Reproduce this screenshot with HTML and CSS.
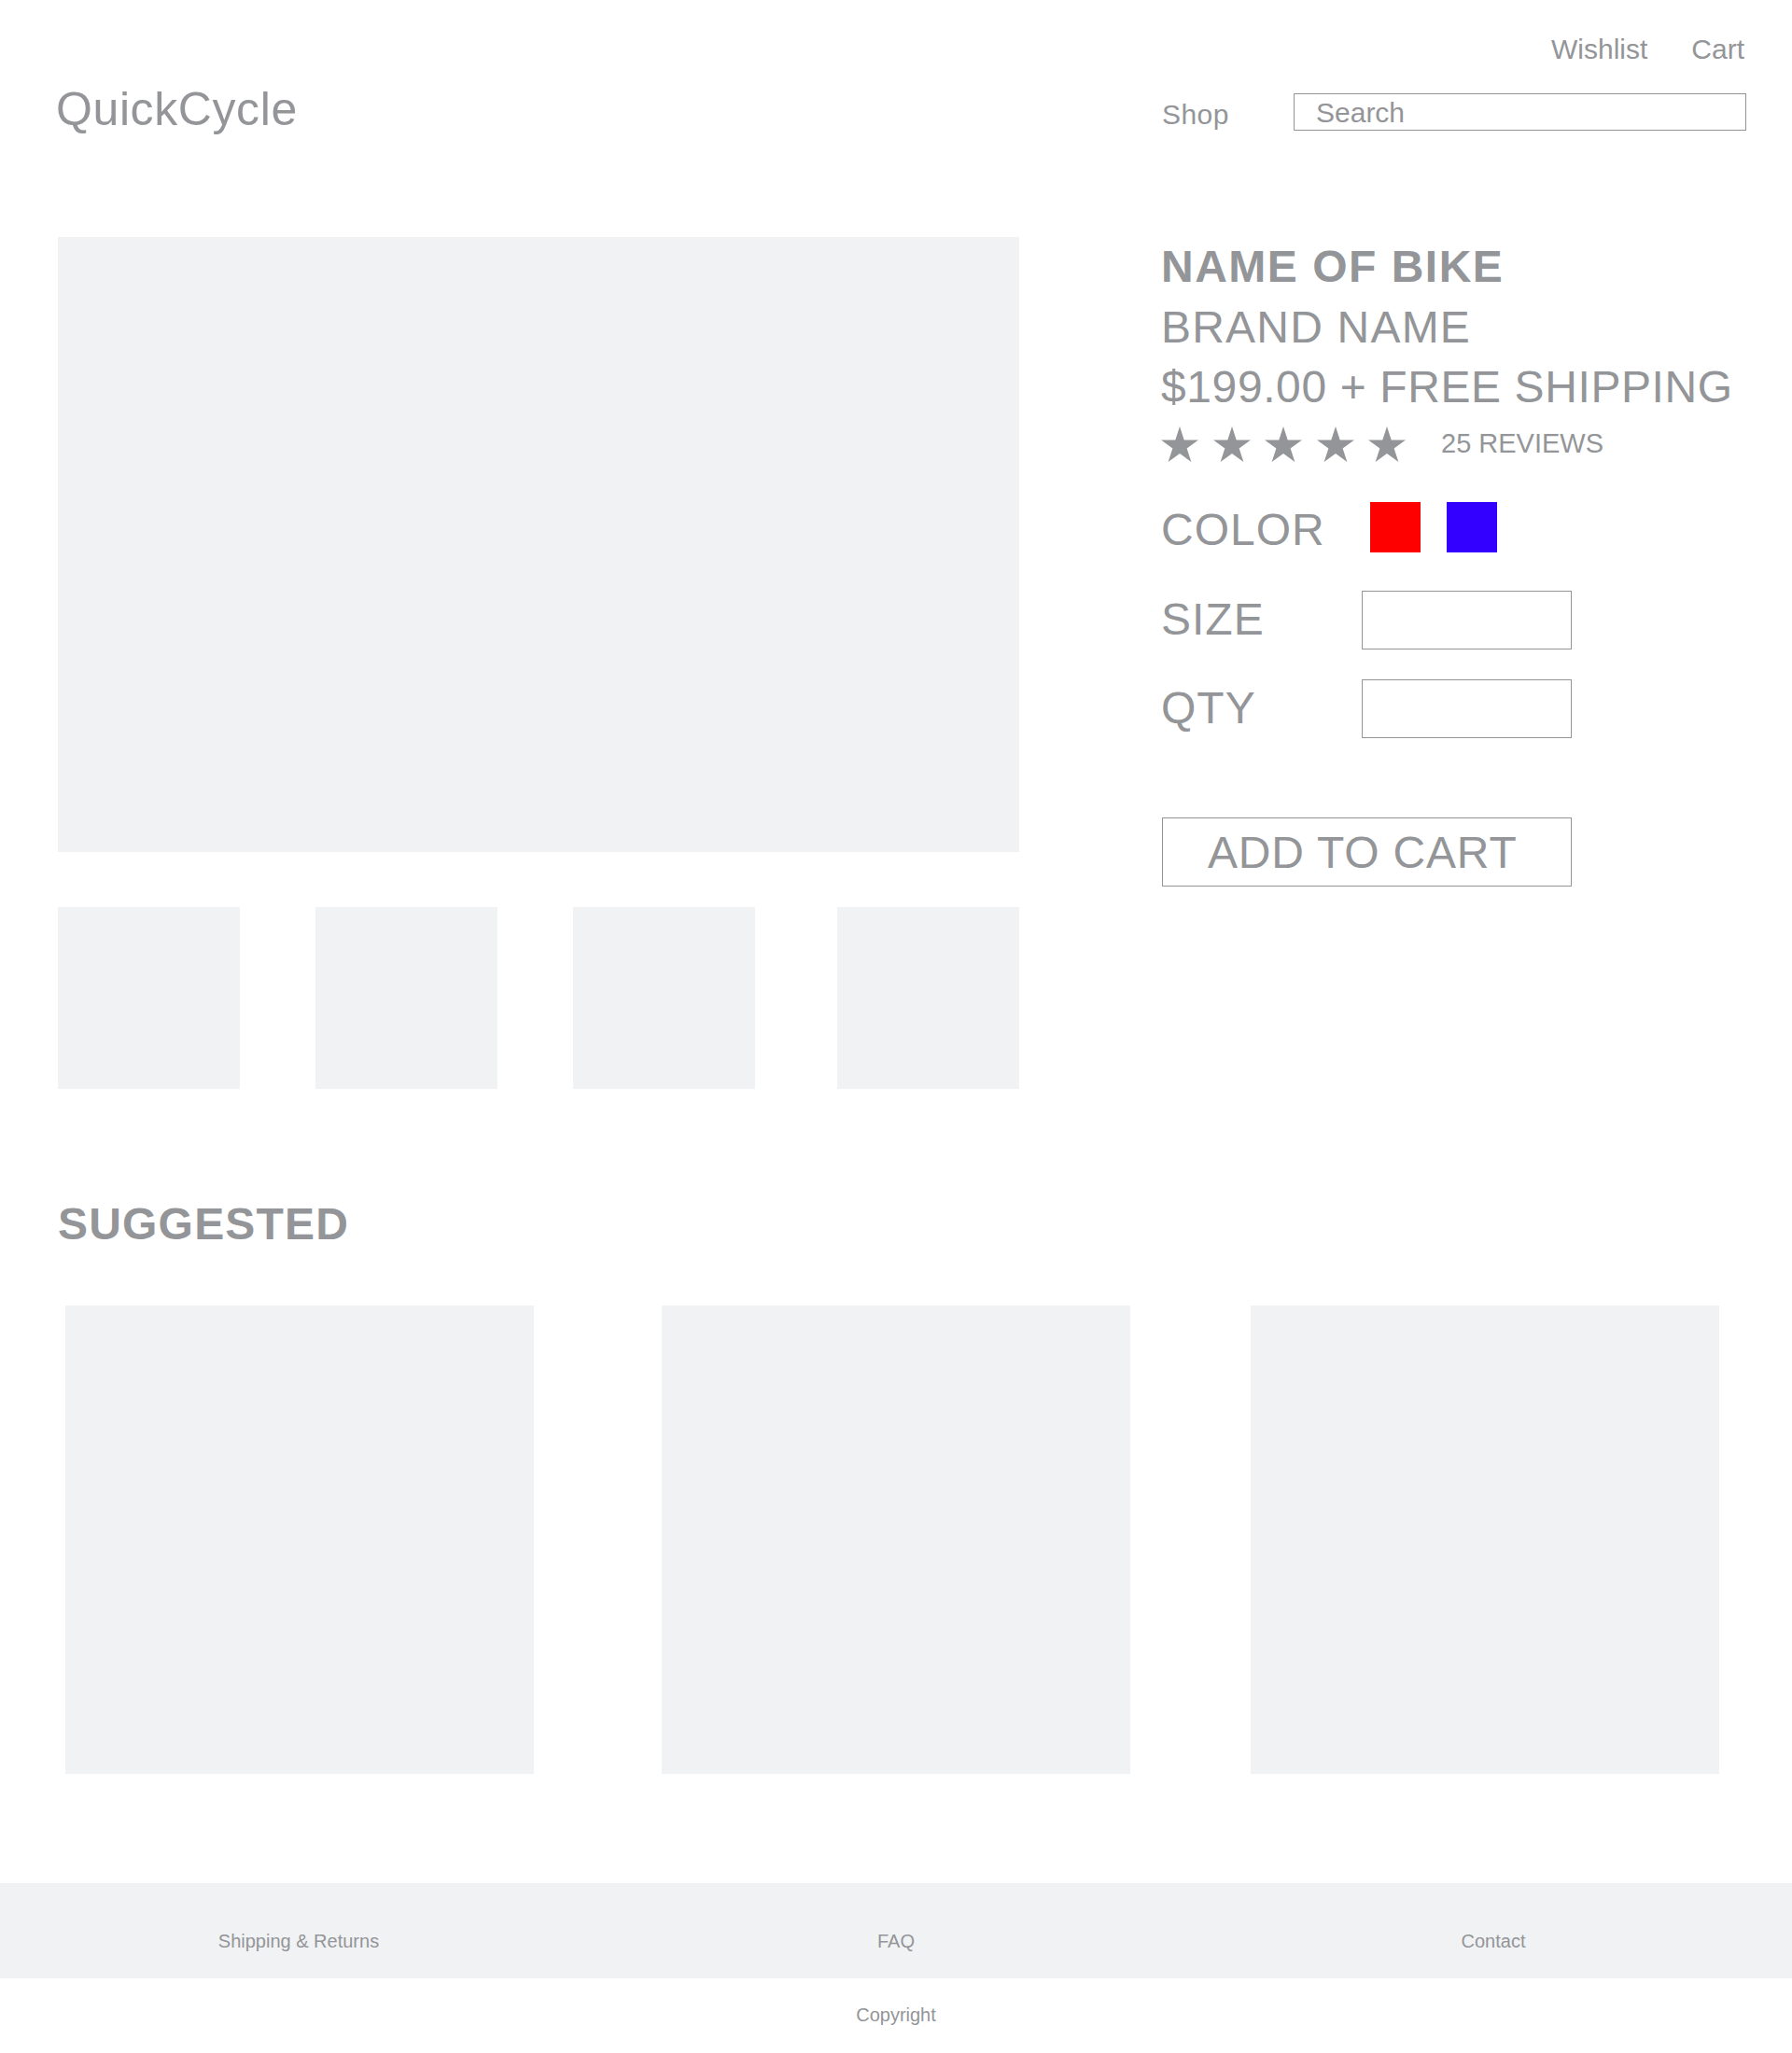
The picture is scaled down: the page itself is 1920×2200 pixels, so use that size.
FILE: index.html
```html
<!DOCTYPE html>
<html lang="en">
<head>
<meta charset="utf-8">
<title>QuickCycle — Name of Bike</title>
<link rel="stylesheet" href="styles.css">
</head>
<body>
<header class="site-header">
  <nav class="util-nav">
    <a href="#" class="util-link">Wishlist</a>
    <a href="#" class="util-link">Cart</a>
  </nav>
  <div class="header-main">
    <div class="logo">QuickCycle</div>
    <div class="header-right">
      <a href="#" class="shop-link">Shop</a>
      <div class="search">Search</div>
    </div>
  </div>
</header>

<main class="product">
  <section class="gallery">
    <div class="hero-img"></div>
    <div class="thumbs">
      <div class="thumb"></div>
      <div class="thumb"></div>
      <div class="thumb"></div>
      <div class="thumb thumb-last"></div>
    </div>
  </section>

  <section class="details">
    <h1 class="bike-name">NAME OF BIKE</h1>
    <p class="bike-line bike-brand">BRAND NAME</p>
    <p class="bike-line bike-price">$199.00 + FREE SHIPPING</p>
    <div class="rating">
      <div class="stars">
        <svg class="star" viewBox="0 0 40 38"><polygon points="20,0 24.71,14.51 39.97,14.51 27.63,23.48 32.34,37.99 20,29.02 7.66,37.99 12.37,23.48 0.03,14.51 15.29,14.51"/></svg>
        <svg class="star" viewBox="0 0 40 38"><polygon points="20,0 24.71,14.51 39.97,14.51 27.63,23.48 32.34,37.99 20,29.02 7.66,37.99 12.37,23.48 0.03,14.51 15.29,14.51"/></svg>
        <svg class="star" viewBox="0 0 40 38"><polygon points="20,0 24.71,14.51 39.97,14.51 27.63,23.48 32.34,37.99 20,29.02 7.66,37.99 12.37,23.48 0.03,14.51 15.29,14.51"/></svg>
        <svg class="star" viewBox="0 0 40 38"><polygon points="20,0 24.71,14.51 39.97,14.51 27.63,23.48 32.34,37.99 20,29.02 7.66,37.99 12.37,23.48 0.03,14.51 15.29,14.51"/></svg>
        <svg class="star" viewBox="0 0 40 38"><polygon points="20,0 24.71,14.51 39.97,14.51 27.63,23.48 32.34,37.99 20,29.02 7.66,37.99 12.37,23.48 0.03,14.51 15.29,14.51"/></svg>
      </div>
      <span class="reviews">25 REVIEWS</span>
    </div>

    <div class="option option-color">
      <span class="opt-label opt-label-color">COLOR</span>
      <div class="swatches">
        <span class="swatch swatch-red"></span>
        <span class="swatch swatch-blue"></span>
      </div>
    </div>
    <div class="option option-size">
      <span class="opt-label">SIZE</span>
      <div class="field"></div>
    </div>
    <div class="option option-qty">
      <span class="opt-label">QTY</span>
      <div class="field"></div>
    </div>

    <button class="add-cart" type="button">ADD TO CART</button>
  </section>
</main>

<section class="suggested">
  <h2 class="suggested-title">SUGGESTED</h2>
  <div class="cards">
    <div class="card"></div>
    <div class="card card-mid"></div>
    <div class="card card-last"></div>
  </div>
</section>

<footer class="site-footer">
  <a href="#" class="foot-link">Shipping &amp; Returns</a>
  <a href="#" class="foot-link">FAQ</a>
  <a href="#" class="foot-link">Contact</a>
</footer>
<div class="copyright">Copyright</div>
</body>
</html>
```

FILE: styles.css
```css
* {
  box-sizing: border-box;
}

html, body {
  margin: 0;
  padding: 0;
  background: #ffffff;
}

body {
  font-family: "Liberation Sans", Arial, Helvetica, sans-serif;
  color: #939598;
  width: 1920px;
}

a {
  color: inherit;
  text-decoration: none;
}

/* ---------- Header ---------- */
.site-header {
  padding: 0 49px 0 62px;
}

.util-nav {
  display: flex;
  justify-content: flex-end;
  gap: 47px;
  padding-top: 38px;
  padding-right: 2px;
}

.util-link {
  font-size: 30px;
  line-height: 30px;
}

.header-main {
  display: flex;
  align-items: flex-start;
  margin-top: 24px;
}

.logo {
  font-size: 50px;
  line-height: 50px;
  letter-spacing: 0.6px;
  margin-left: -2px;
}

.header-right {
  margin-left: auto;
  display: flex;
  align-items: flex-start;
  gap: 69px;
}

.shop-link {
  font-size: 30px;
  line-height: 30px;
  letter-spacing: 0.5px;
  margin-top: 16px;
}

.search {
  margin-top: 8px;
  width: 485px;
  height: 40px;
  border: 1px solid #939598;
  font-size: 30px;
  line-height: 36px;
  padding: 2px 0 0 23px;
}

/* ---------- Product ---------- */
.product {
  display: flex;
  align-items: flex-start;
  padding: 0 49px 0 62px;
  margin-top: 112px;
}

.gallery {
  width: 1030px;
  flex: none;
}

.hero-img {
  height: 659px;
  background: #f1f2f4;
}

.thumbs {
  display: flex;
  gap: 81px;
  margin-top: 59px;
}

.thumb {
  flex: none;
  width: 195px;
  height: 195px;
  background: #f1f2f4;
}

.thumb-last {
  margin-left: auto;
}

.details {
  margin-left: 152px;
  flex: 1;
}

.bike-name,
.bike-line {
  margin: 0;
  font-size: 48px;
  line-height: 64.5px;
  white-space: nowrap;
}

.bike-name {
  font-weight: 700;
  letter-spacing: 1.5px;
}

.bike-line {
  font-weight: 400;
}

.bike-brand {
  letter-spacing: 1.2px;
}

.bike-price {
  letter-spacing: 0.6px;
}

.rating {
  display: flex;
  align-items: center;
  margin-top: 9px;
}

.stars {
  display: flex;
  gap: 15.5px;
}

.star {
  width: 40px;
  height: 38px;
  display: block;
  fill: #939598;
}

.reviews {
  margin-left: 38px;
  font-size: 29px;
  line-height: 29px;
}

.option {
  display: flex;
  align-items: center;
}

.opt-label {
  width: 215px;
  flex: none;
  font-size: 48px;
  line-height: 48px;
  letter-spacing: 1px;
}

.option-color {
  margin-top: 43px;
}

.opt-label-color {
  margin-top: 6px;
}

.swatches {
  display: flex;
  gap: 28px;
  margin-left: 9px;
}

.swatch {
  display: block;
  width: 54px;
  height: 54px;
}

.swatch-red {
  background: #ff0000;
}

.swatch-blue {
  background: #3300ff;
}

.option-size {
  margin-top: 41px;
}

.option-qty {
  margin-top: 32px;
}

.field {
  width: 225px;
  height: 63px;
  border: 1px solid #939598;
}

.add-cart {
  display: block;
  margin-top: 85px;
  margin-left: 1px;
  width: 439px;
  height: 74px;
  border: 1px solid #939598;
  background: #ffffff;
  color: #939598;
  font-family: inherit;
  font-size: 48px;
  line-height: 48px;
  letter-spacing: 0.8px;
  padding: 2px 0 0 48px;
  text-align: left;
  cursor: pointer;
}

/* ---------- Suggested ---------- */
.suggested {
  padding: 0 49px 0 62px;
}

.suggested-title {
  margin: 121px 0 0 0;
  font-size: 48px;
  line-height: 48px;
  font-weight: 700;
  letter-spacing: 1.2px;
}

.cards {
  display: flex;
  margin: 63px 29px 0 8px;
}

.card {
  flex: none;
  width: 502px;
  height: 502px;
  background: #f1f2f4;
}

.card-mid {
  margin-left: 137px;
}

.card-last {
  margin-left: auto;
}

/* ---------- Footer ---------- */
.site-footer {
  margin-top: 117px;
  background: #f1f2f4;
  display: grid;
  grid-template-columns: repeat(3, 1fr);
  padding: 52px 0 30px;
}

.foot-link {
  text-align: center;
  font-size: 20px;
  line-height: 20px;
}

.copyright {
  text-align: center;
  font-size: 20px;
  line-height: 20px;
  padding: 29px 0 26px;
}
```
